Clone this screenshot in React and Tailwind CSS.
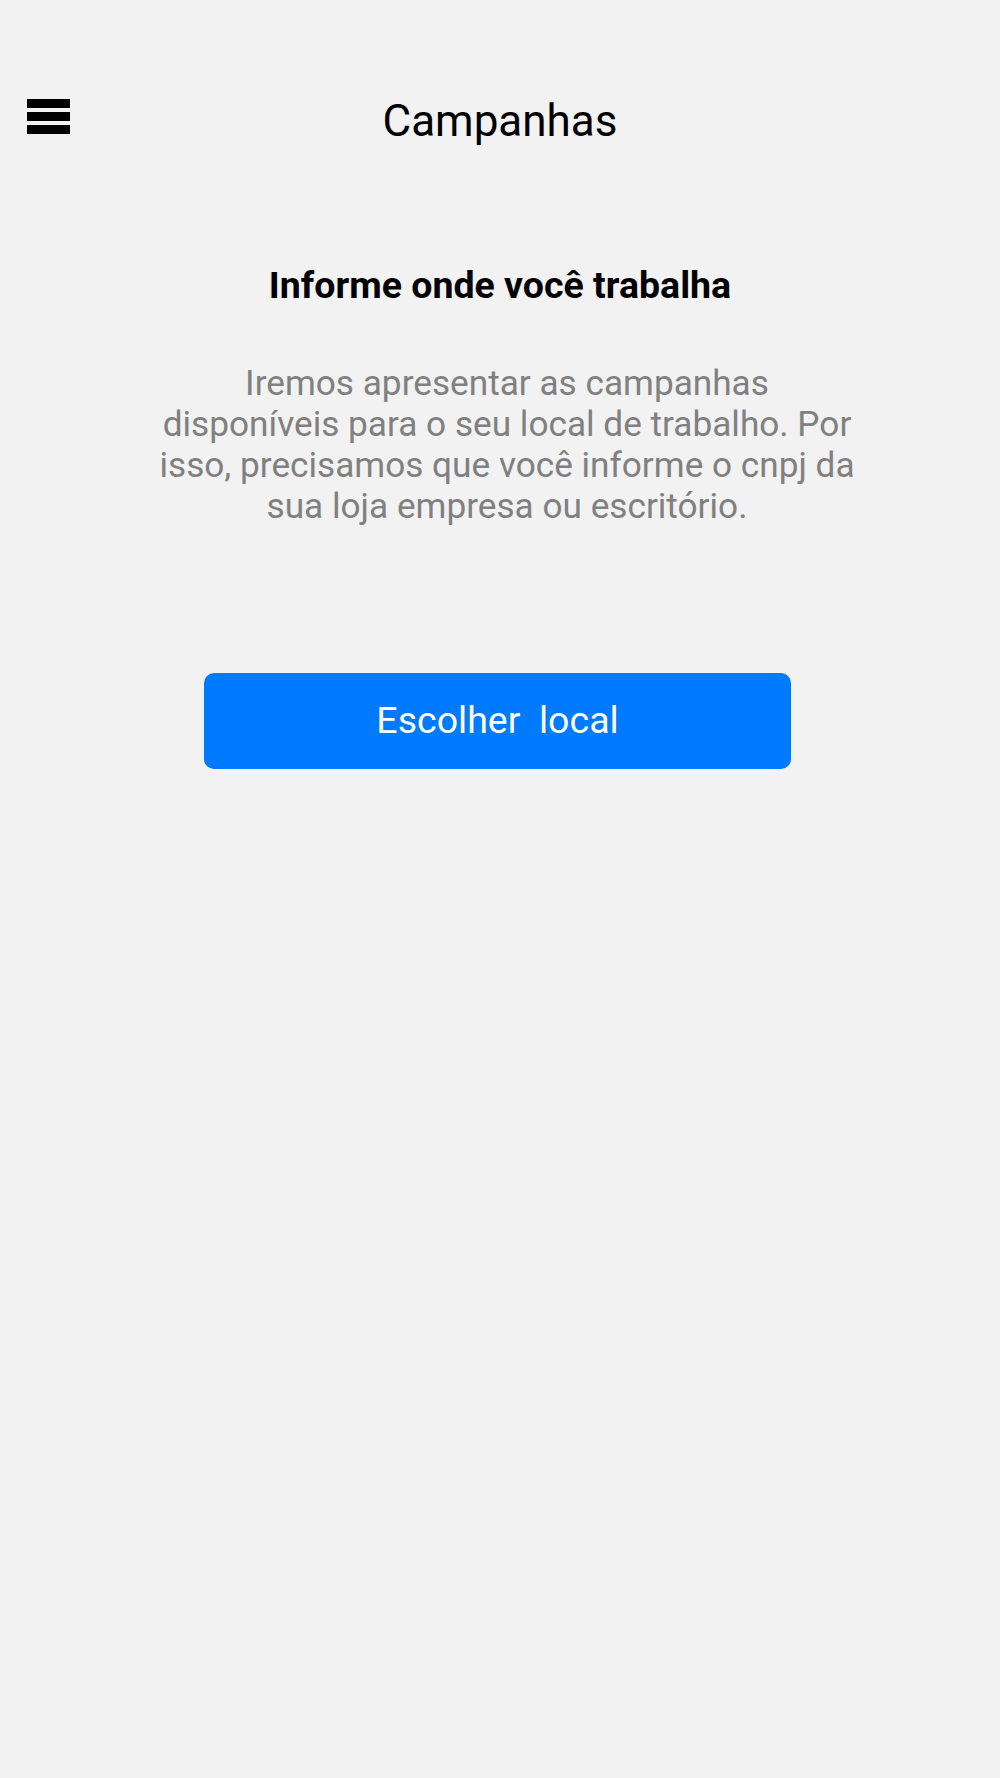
export default function App() {
  return (
    <div className="min-h-[1778px] w-full bg-[#f2f2f2] font-['Roboto',sans-serif]">
      {/* HEADER */}
      <header className="relative flex h-[147px] items-start justify-center pt-[99px]">
        <button className="absolute left-[27px] top-[99px] flex w-[43px] flex-col gap-[4px]">
          <span className="block h-[9px] w-full bg-black" />
          <span className="block h-[9px] w-full bg-black" />
          <span className="block h-[9px] w-full bg-black" />
        </button>
        <h1 className="text-[44px] leading-none text-black">Campanhas</h1>
      </header>

      {/* CONTENT */}
      <main className="flex flex-col items-center pt-[120px]">
        <h2 className="text-[37.5px] font-bold leading-none text-black">Informe onde você trabalha</h2>
        <p className="ml-[14px] mt-[58px] text-center text-[35.2px] leading-[41px] text-[#808080]">
          Iremos apresentar as campanhas
          <br />
          disponíveis para o seu local de trabalho. Por
          <br />
          isso, precisamos que você informe o cnpj da
          <br />
          sua loja empresa ou escritório.
        </p>
        <button className="mr-[5px] mt-[146px] flex h-[96px] w-[587px] items-center justify-center rounded-[10px] bg-[#007aff] text-[37.5px] text-white">
          Escolher&nbsp; local
        </button>
      </main>
    </div>
  );
}
